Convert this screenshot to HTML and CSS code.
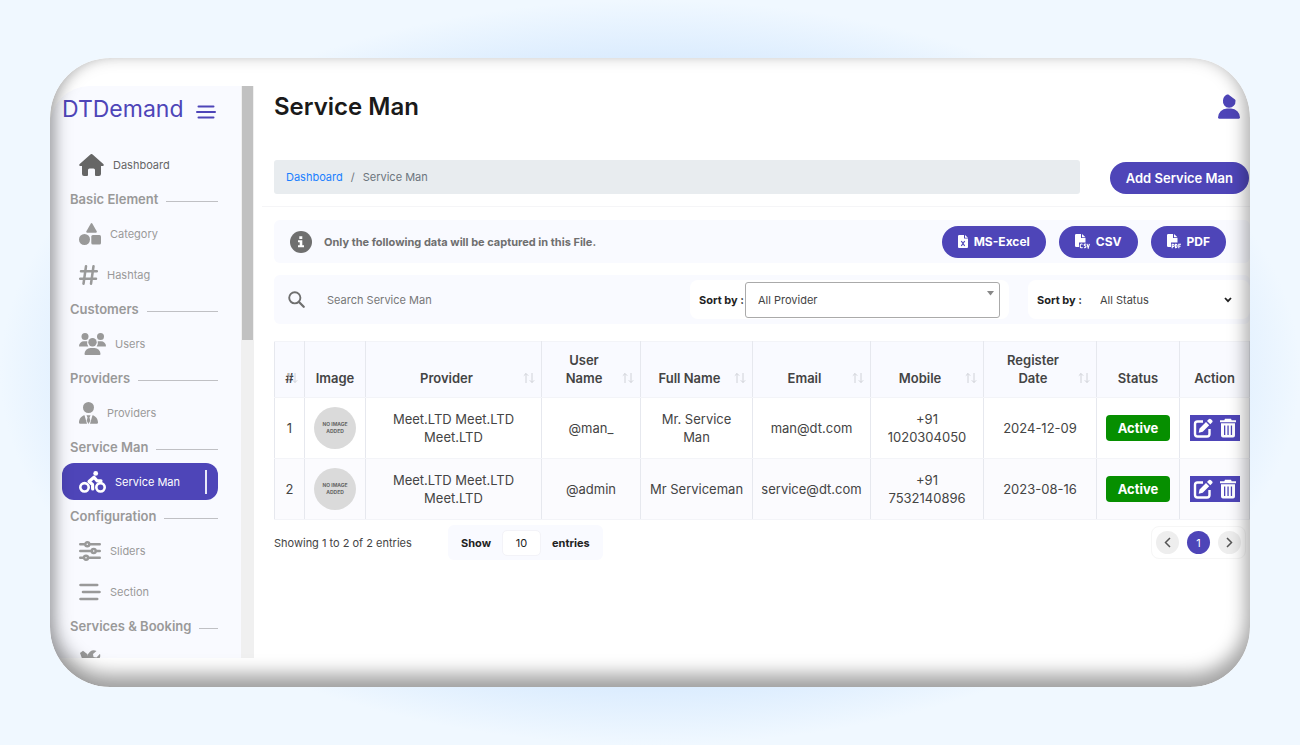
FILE: index.html
```html
<!DOCTYPE html>
<html lang="en">
<head>
<meta charset="utf-8">
<meta name="viewport" content="width=device-width, initial-scale=1">
<title>Service Man - DTDemand</title>
<link rel="stylesheet" href="styles.css">
</head>
<body>
<svg class="sprite" aria-hidden="true">
  <symbol id="sort" viewBox="0 0 12 12"><path d="M3 11V1.500M.8 3.700 3 1.500l2.200 2.200M9 1v9.500M6.800 8.300 9 10.500l2.200-2.200" fill="none" stroke="currentColor"/></symbol>
  <symbol id="edit" viewBox="0 0 20 20"><path d="M10 3.500H4.500a2.500 2.500 0 0 0-2.500 2.500v10a2.500 2.500 0 0 0 2.500 2.500h9.500a2.500 2.500 0 0 0 2.500-2.500v-5" fill="none" stroke="currentColor" stroke-width="2.400"/><path d="M6.500 10.500 13 4l3.200 3.200-6.500 6.500-4 1zM14 3l1.700-1.700a1.600 1.600 0 0 1 2.300 0l1 1a1.600 1.600 0 0 1 0 2.300L17.300 6.300z" fill="currentColor"/></symbol>
  <symbol id="trash" viewBox="0 0 18 20"><path d="M6 .8h6l.7 1.400H17v2H1v-2h4.300z" fill="currentColor"/><path fill-rule="evenodd" d="M2 5.200h14V17.500a2 2 0 0 1-2 2H4a2 2 0 0 1-2-2zM5 7.500v9.500h1.300V7.500zM8.400 7.500v9.500h1.300V7.500zM11.800 7.500v9.500h1.300V7.500z" fill="currentColor"/></symbol>
</svg>

<div class="frame">
  <aside class="sidebar">
    <div class="sidebar-body">
      <div class="brand">
        <span class="brand-name">DTDemand</span>
        <button class="toggle" type="button" aria-label="Toggle menu">
          <svg width="20" height="14" viewBox="0 0 20 14"><path d="M2.500 1.500h15M1 7h18M2.500 12.500h15" stroke="currentColor" stroke-width="2" stroke-linecap="round"/></svg>
        </button>
      </div>
      <nav class="menu">
        <a class="item item-dark" href="#">
          <svg width="25" height="22" viewBox="0 0 25 22"><path d="M11.400.5a1.600 1.600 0 0 1 2.200 0l10.700 9.600c.9.900.4 2-.8 2H22v8a2 2 0 0 1-2 1.900h-3a1 1 0 0 1-1-1v-5a1.500 1.500 0 0 0-1.500-1.500h-4A1.500 1.500 0 0 0 9 16v5a1 1 0 0 1-1 1H5a2 2 0 0 1-2-1.900v-8H1.500c-1.200 0-1.700-1.100-.8-2z" fill="currentColor"/></svg>
          Dashboard</a>
        <h2 class="group">Basic Element</h2>
        <a class="item" href="#">
          <svg width="22" height="22" viewBox="0 0 22 22"><path d="M11.700.7a1 1 0 0 1 1.700 0l4.300 7.500c.4.700 0 1.500-.8 1.500H8.200c-.8 0-1.200-.8-.8-1.500z" fill="currentColor"/><circle cx="5.500" cy="16.500" r="5.500" fill="currentColor"/><rect x="12.300" y="12" width="9.700" height="9.500" rx="1.500" fill="currentColor"/></svg>
          Category</a>
        <a class="item" href="#">
          <svg width="19" height="20" viewBox="0 0 19 20"><path d="M7 1.300 4.500 18.700M14.500 1.300 12 18.700M2 6.200h15.800M1.200 13.800H17" fill="none" stroke="currentColor" stroke-width="2.500" stroke-linecap="round"/></svg>
          Hashtag</a>
        <h2 class="group">Customers</h2>
        <a class="item" href="#">
          <svg width="27" height="22" viewBox="0 0 27 22"><g fill="currentColor"><circle cx="6" cy="3.500" r="3.500"/><circle cx="21.500" cy="3.500" r="3.500"/><circle cx="13.500" cy="9.300" r="4.200"/><path d="M0 13.200a5 5 0 0 1 5-5h2.500l.8.100a6 6 0 0 0 1 5.100H.5zM27 13.200a5 5 0 0 0-5-5h-2.500l-.8.100a6 6 0 0 1-1 5.100h8.800zM5.500 21a6 6 0 0 1 6-6h4a6 6 0 0 1 6 6 1 1 0 0 1-1 1h-14a1 1 0 0 1-1-1z"/></g></svg>
          Users</a>
        <h2 class="group">Providers</h2>
        <a class="item" href="#">
          <svg width="19" height="22" viewBox="0 0 19 22"><g fill="currentColor"><circle cx="9.500" cy="5.500" r="5.500"/><path d="M0 20.500c0-3.500 2.300-6.500 5.500-7.200L8 21.800H1.200A1.200 1.200 0 0 1 0 20.500zM19 20.500c0-3.500-2.300-6.500-5.500-7.200L11 21.800h6.800a1.200 1.200 0 0 0 1.200-1.300zM7.500 13.200h4l-1 2.200.8 3.400L9.500 22l-1.800-3.200.8-3.400z"/></g></svg>
          Providers</a>
        <h2 class="group">Service Man</h2>
        <a class="item item-active" href="#" aria-current="page">
          <svg width="27" height="22" viewBox="0 0 27 22"><g fill="none" stroke="currentColor"><circle cx="5.500" cy="16.300" r="4.200" stroke-width="2.600"/><circle cx="21.500" cy="16.300" r="4.200" stroke-width="2.600"/><path d="m13.700 18-.2-4.500-3.500-3 5-4.300 3 3.600h4" stroke-width="3.200" stroke-linecap="round" stroke-linejoin="round"/></g><circle cx="16.700" cy="2.400" r="2.400" fill="currentColor"/></svg>
          Service Man</a>
        <h2 class="group">Configuration</h2>
        <a class="item" href="#">
          <svg width="22" height="20" viewBox="0 0 22 20"><g fill="none" stroke="currentColor" stroke-width="2.400" stroke-linecap="round"><path d="M1.200 3.200h4.500M11 3.200h9.800M1.200 10h10.500M17.500 10h3.300M1.200 16.800h3.300M10 16.800h10.800"/><circle cx="8.300" cy="3.200" r="2"/><circle cx="14.700" cy="10" r="2"/><circle cx="7" cy="16.800" r="2"/></g></svg>
          Sliders</a>
        <a class="item" href="#">
          <svg width="22" height="18" viewBox="0 0 22 18"><path d="M1.500 2h16.700M4 9h16.500M1.500 16h16.700" stroke="currentColor" stroke-width="2.600" stroke-linecap="round"/></svg>
          Section</a>
        <h2 class="group">Services &amp; Booking</h2>
        <a class="item" href="#" aria-label="Services">
          <svg width="22" height="22" viewBox="0 0 22 22"><path d="M1 3 4 .8l4.500 3.400.3 2.500 10 10-3 3-10-10-2.500-.4zM21 3.800A6 6 0 0 1 13 11L5 20a3 3 0 0 1-4-4l8-8a6 6 0 0 1 8.500-7L14 4l.5 3 3 .5z" fill="currentColor"/></svg>
        </a>
      </nav>
    </div>
    <div class="track"><div class="thumb"></div></div>
  </aside>

  <main class="main">
    <header class="top">
      <h1 class="title">Service Man</h1>
      <button class="account" type="button" aria-label="Account">
        <svg width="22" height="25" viewBox="0 0 22 25"><path d="M8.500.8C9.300.3 10.200.2 11 .9l6 4.600c.5.400.6.900.5 1.500A6.300 6.300 0 1 1 5 6.500C5 4 6.500 1.800 8.500.8z" fill="currentColor"/><path d="M0 23.500a9 9 0 0 1 9-9h4a9 9 0 0 1 9 9c0 .7-.5 1.200-1.200 1.200H1.200C.5 24.700 0 24.200 0 23.500z" fill="currentColor"/></svg>
      </button>
    </header>

    <div class="crumb-row">
      <nav class="crumbs" aria-label="Breadcrumb"><a class="crumb-link" href="#">Dashboard</a><span class="slash">/</span><span>Service Man</span></nav>
      <button class="pill" type="button">Add Service Man</button>
    </div>

    <section class="band info">
      <svg width="22" height="22" viewBox="0 0 22 22"><circle cx="11" cy="11" r="11" fill="currentColor"/><path d="M9.300 5.300h3V8h-3zM8 9.300h4.300v5H14v2H8v-2h1.700v-3H8z" fill="#fff"/></svg>
      <p class="info-text">Only the following data will be captured in this File.</p>
      <div class="exports">
        <button class="pill" type="button"><svg width="10" height="13" viewBox="0 0 10 13"><path fill-rule="evenodd" d="M1.300 0H6v3.500h4V12a1 1 0 0 1-1 1H1a1 1 0 0 1-1-1V1.300A1.300 1.300 0 0 1 1.300 0zM7 0l3 2.800H7z" fill="#fff"/><path d="m3.300 6 3.400 5M6.700 6l-3.400 5" stroke="#4e45b8" stroke-width="1.200"/></svg>MS-Excel</button>
        <button class="pill" type="button"><svg width="15" height="15" viewBox="0 0 15 15"><path d="M1.300 0H6v4h4.500v4.500H4V13H1.200A1.200 1.200 0 0 1 0 11.800V1.300A1.300 1.300 0 0 1 1.300 0zM7 0l3.500 3.200H7z" fill="#fff"/><path d="M7.500 10.500a1.200 1.200 0 0 0-2.200.5v1.800a1.200 1.200 0 0 0 2.200.4M11 10.300c-1.800-.7-2.500 1-.9 1.500s.8 2.400-1.100 1.700M12 9.800l1.200 4.200 1.200-4.200" fill="none" stroke="#fff" stroke-width="1.100"/></svg>CSV</button>
        <button class="pill" type="button"><svg width="14" height="15" viewBox="0 0 14 15"><path d="M1.300 0H6v4h4.500v4.500H4V13H1.200A1.200 1.200 0 0 1 0 11.800V1.300A1.300 1.300 0 0 1 1.300 0zM7 0l3.500 3.200H7z" fill="#fff"/><path d="M5.200 14.300v-4h.8a1.100 1.100 0 0 1 0 2.300h-.8M8.500 10.300v3.500h.5c1.300 0 1.500-3.500 0-3.500zM11.800 14.300v-4h2.200M11.800 12.200h1.800" fill="none" stroke="#fff" stroke-width="1.100"/></svg>PDF</button>
      </div>
    </section>

    <section class="band filters">
      <label class="search">
        <svg width="17" height="17" viewBox="0 0 17 17"><circle cx="6.800" cy="6.800" r="5.600" fill="none" stroke="currentColor" stroke-width="1.900"/><path d="m11 11 4.700 4.700" stroke="currentColor" stroke-width="2.300" stroke-linecap="round"/></svg>
        <input class="search-input" type="text" placeholder="Search Service Man" aria-label="Search Service Man">
      </label>
      <div class="sort sort-provider">
        <label class="sort-label" for="provider">Sort by :</label>
        <span class="select-wrap boxed">
          <select class="select" id="provider"><option>All Provider</option></select>
          <svg class="caret" width="7" height="5" viewBox="0 0 7 5"><path d="M0 0h7L3.500 4.500z" fill="#888"/></svg>
        </span>
      </div>
      <div class="sort sort-status">
        <label class="sort-label" for="status">Sort by :</label>
        <span class="select-wrap">
          <select class="select" id="status"><option>All Status</option></select>
          <svg class="chevron" width="8" height="6" viewBox="0 0 8 6"><path d="m1 1 3 3.200L7 1" fill="none" stroke="#222" stroke-width="1.800"/></svg>
        </span>
      </div>
    </section>

    <table class="table">
      <colgroup><col class="c-num"><col class="c-img"><col><col class="c-user"><col class="c-full"><col class="c-mail"><col class="c-mob"><col class="c-date"><col class="c-stat"><col class="c-act"></colgroup>
      <thead>
        <tr>
          <th>#<svg class="arrows"><use href="#sort"/></svg></th>
          <th>Image</th>
          <th class="sortable">Provider<svg class="arrows"><use href="#sort"/></svg></th>
          <th class="sortable">User Name<svg class="arrows"><use href="#sort"/></svg></th>
          <th class="sortable">Full Name<svg class="arrows"><use href="#sort"/></svg></th>
          <th class="sortable">Email<svg class="arrows"><use href="#sort"/></svg></th>
          <th class="sortable">Mobile<svg class="arrows"><use href="#sort"/></svg></th>
          <th class="sortable">Register Date<svg class="arrows"><use href="#sort"/></svg></th>
          <th>Status</th>
          <th>Action</th>
        </tr>
      </thead>
      <tbody>
        <tr>
          <td>1</td>
          <td><span class="avatar">NO IMAGE ADDED</span></td>
          <td>Meet.LTD Meet.LTD<br>Meet.LTD</td>
          <td>@man_</td>
          <td>Mr. Service<br>Man</td>
          <td>man@dt.com</td>
          <td>+91<br>1020304050</td>
          <td>2024-12-09</td>
          <td><button class="status" type="button">Active</button></td>
          <td><span class="actions"><button class="act" type="button" aria-label="Edit"><svg width="20" height="20"><use href="#edit"/></svg></button><button class="act" type="button" aria-label="Delete"><svg width="18" height="20"><use href="#trash"/></svg></button></span></td>
        </tr>
        <tr>
          <td>2</td>
          <td><span class="avatar">NO IMAGE ADDED</span></td>
          <td>Meet.LTD Meet.LTD<br>Meet.LTD</td>
          <td>@admin</td>
          <td>Mr Serviceman</td>
          <td>service@dt.com</td>
          <td>+91<br>7532140896</td>
          <td>2023-08-16</td>
          <td><button class="status" type="button">Active</button></td>
          <td><span class="actions"><button class="act" type="button" aria-label="Edit"><svg width="20" height="20"><use href="#edit"/></svg></button><button class="act" type="button" aria-label="Delete"><svg width="18" height="20"><use href="#trash"/></svg></button></span></td>
        </tr>
      </tbody>
    </table>

    <footer class="foot">
      <p class="count">Showing 1 to 2 of 2 entries</p>
      <label class="length">Show
        <select class="length-select"><option>10</option></select>
        entries</label>
      <nav class="pages" aria-label="Pages">
        <button class="page" type="button" aria-label="Previous"><svg width="7" height="11" viewBox="0 0 7 11"><path d="M6 1 1.500 5.500 6 10" fill="none" stroke="currentColor" stroke-width="1.500"/></svg></button>
        <button class="page page-on" type="button">1</button>
        <button class="page" type="button" aria-label="Next"><svg width="7" height="11" viewBox="0 0 7 11"><path d="m1 1 4.500 4.500L1 10" fill="none" stroke="currentColor" stroke-width="1.500"/></svg></button>
      </nav>
    </footer>
  </main>
</div>
</body>
</html>
```
FILE: styles.css
```css
*, *::before, *::after { box-sizing: border-box; }

body {
  margin: 0;
  min-height: 100vh;
  padding: 58px 50px;
  display: flex;
  font-family: Inter, "Open Sans", sans-serif;
  font-size: 11px;
  color: #444;
  background: radial-gradient(closest-side, #d0e6fd 70%, #dbecfe 84%, #f0f8ff 100%) #f0f8ff;
}

button, input, select { font: inherit; color: inherit; }
button { border: 0; padding: 0; background: none; cursor: pointer; }
h1, h2, p { margin: 0; }
a { text-decoration: none; }
.sprite { position: absolute; width: 0; height: 0; }

.frame {
  position: relative;
  flex: 1;
  min-width: 0;
  display: flex;
  padding: 28px 0;
  border-radius: 60px;
  overflow: hidden;
  background: #fff;
}
.frame::after {
  content: "";
  position: absolute;
  inset: 0;
  border-radius: 60px;
  box-shadow: inset 0 -9px 18px 4px rgba(0, 0, 0, .36), inset 8px 0 12px -4px rgba(0, 0, 0, .08);
  pointer-events: none;
}

/* Sidebar */
.sidebar {
  flex: none;
  width: 204px;
  height: 572px;
  display: flex;
  overflow: hidden;
  border-top-left-radius: 40px;
  background: #f9faff;
}
.sidebar-body { flex: 1; padding: 8px 23px 0 12px; }
.brand {
  display: flex;
  align-items: center;
  justify-content: space-between;
  height: 30px;
  margin-bottom: 20px;
  padding-right: 2px;
  color: #4e45b8;
}
.brand-name { font-size: 23px; line-height: 30px; }
.toggle { display: flex; padding-top: 6px; }
.menu { display: flex; flex-direction: column; }
.item {
  display: flex;
  align-items: center;
  gap: 9px;
  height: 37px;
  margin: 2px 0;
  padding-left: 17px;
  border-radius: 12px;
  color: #999;
}
.item-dark { color: #666; }
.item-active { color: #fff; background: #4e45b8; }
.item-active::after {
  content: "";
  width: 2px;
  height: 24px;
  margin-left: auto;
  margin-right: 11px;
  background: #e8e8f8;
}
.group {
  display: flex;
  align-items: center;
  gap: 8px;
  height: 28px;
  padding-left: 8px;
  font-size: 13px;
  font-weight: 600;
  white-space: nowrap;
  color: #999;
}
.group::after { content: ""; flex: 1; height: 1px; margin-top: 4px; background: #c0c0c4; }
.track { width: 13px; padding: 0 1px; background: #f0f0f0; }
.thumb { height: 254px; background: #c1c1c1; }

/* Main column */
.main { flex: 1; min-width: 0; padding-left: 20px; }
.top {
  display: flex;
  align-items: center;
  justify-content: space-between;
  height: 40px;
  margin-bottom: 34px;
  padding-right: 10px;
}
.title { font-size: 24px; font-weight: 600; color: #1a1a1a; }
.account { display: flex; color: #4e45b8; }

.crumb-row {
  display: flex;
  align-items: flex-start;
  gap: 30px;
  height: 47px;
  margin-left: -12px;
  padding-left: 12px;
  border-bottom: 1px solid #f5f5f7;
}
.crumbs {
  flex: 1;
  display: flex;
  gap: 8px;
  padding: 0 12px;
  line-height: 34px;
  border-radius: 3px;
  color: #6c757d;
  background: #e8ecef;
}
.crumb-link { color: #1a80ff; }
.pill {
  display: flex;
  align-items: center;
  gap: 6px;
  height: 32px;
  padding: 0 16px;
  border-radius: 16px;
  font-size: 12px;
  font-weight: 700;
  color: #fff;
  background: #4e45b8;
}
.crumb-row .pill { margin: 2px 1px 0 0; font-size: 13px; font-weight: 600; }

.band {
  display: flex;
  align-items: center;
  border-radius: 6px;
  background: #f9faff;
}
.info {
  height: 43px;
  margin: 13px 0 12px;
  padding: 0 24px 0 16px;
  gap: 12px;
  color: #6f6f6f;
}
.info-text { font-weight: 700; }
.exports { display: flex; gap: 13px; margin-left: auto; }

.filters { height: 49px; margin-bottom: 17px; padding-left: 14px; }
.search { flex: 1; display: flex; align-items: center; gap: 22px; color: #6f6f6f; }
.search-input { flex: 1; min-width: 0; padding: 0; border: 0; outline: 0; background: none; }
.search-input::placeholder { color: #777; opacity: 1; }
.sort { display: flex; align-items: center; height: 39px; border-radius: 8px; background: #fff; }
.sort-provider { width: 319px; margin-right: 19px; padding: 0 9px; gap: 1px; }
.sort-status { width: 222px; padding: 0 18px 0 9px; gap: 18px; }
.sort-label { flex: none; font-weight: 700; color: #222; }
.select-wrap { position: relative; flex: 1; display: flex; height: 36px; }
.boxed { border: 1px solid #aaa; border-radius: 3px; }
.select {
  flex: 1;
  min-width: 0;
  padding: 0;
  border: 0;
  appearance: none;
  background: none;
}
.boxed .select { padding-left: 12px; }
.caret { position: absolute; right: 5px; top: 8px; }
.chevron { position: absolute; right: 0; top: 15px; }

/* Table */
.table {
  width: 100%;
  table-layout: fixed;
  border-collapse: collapse;
  font-size: 13px;
  line-height: 18px;
  text-align: center;
}
.c-num { width: 30px; }
.c-img { width: 61px; }
.c-user { width: 99px; }
.c-full { width: 112px; }
.c-mail { width: 118px; }
.c-mob { width: 113px; }
.c-date { width: 113px; }
.c-stat { width: 83px; }
.c-act { width: 70px; }
.table th, .table td { padding: 0; border: 1px solid #e6e8ee; border-top-color: #f3f4f8; border-bottom-color: #f3f4f8; }
.table th {
  position: relative;
  height: 56px;
  padding-bottom: 10px;
  vertical-align: bottom;
  font-weight: 600;
  color: #444;
  background: #f9faff;
}
.table .sortable { padding-right: 24px; padding-left: 10px; }
.table td { height: 61px; }
.table tbody tr:nth-child(2) { background: #fbfbfe; }
.arrows { position: absolute; right: 6px; bottom: 13px; width: 12px; height: 12px; color: #d0d2d8; }
.avatar {
  display: flex;
  align-items: center;
  width: 42px;
  height: 42px;
  margin: 0 auto;
  padding: 0 7px;
  border-radius: 50%;
  font-size: 5px;
  font-weight: 700;
  line-height: 7px;
  color: #666;
  background: #dadada;
}
.status {
  width: 64px;
  height: 26px;
  border-radius: 4px;
  font-weight: 700;
  color: #fff;
  background: #068f00;
}
.actions {
  display: inline-flex;
  gap: 6px;
  padding: 3px;
  vertical-align: middle;
  color: #fff;
  background: #4e45b8;
}
.act { display: flex; }

/* Table footer */
.foot { display: flex; align-items: center; height: 35px; margin-top: 5px; }
.count { width: 174px; white-space: nowrap; }
.length {
  display: flex;
  align-items: center;
  gap: 11px;
  height: 35px;
  padding: 0 13px;
  border-radius: 6px;
  font-weight: 700;
  color: #222;
  background: #f9faff;
}
.length-select {
  width: 39px;
  height: 26px;
  padding: 0;
  border: 1px solid #f3f3f8;
  border-radius: 5px;
  appearance: none;
  font-weight: 400;
  text-align: center;
  text-align-last: center;
  background: #fff;
}
.pages {
  display: flex;
  gap: 8px;
  margin-left: auto;
  margin-right: 4px;
  padding: 4px;
  border: 1px solid #f6f6f6;
  border-radius: 8px;
}
.page {
  display: flex;
  align-items: center;
  justify-content: center;
  width: 23px;
  height: 23px;
  border-radius: 50%;
  color: #555;
  background: #eee;
}
.page-on { color: #fff; background: #4e45b8; }
```
